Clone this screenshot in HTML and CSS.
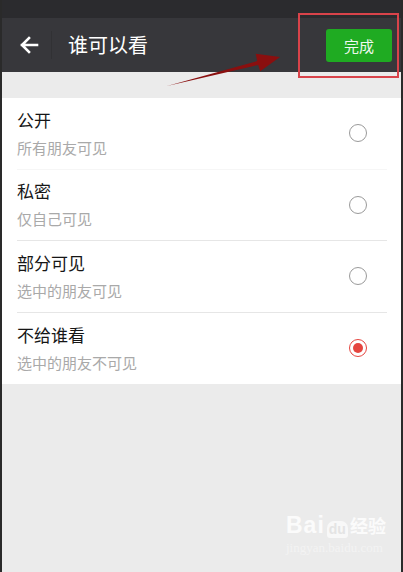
FILE: index.html
```html
<!DOCTYPE html>
<html>
<head>
    <meta charset="utf-8">
    <title>谁可以看</title>
    <link rel="stylesheet" href="styles.css">
</head>
<body>
    <div class="screen">
        <div class="statusBar"></div>
        <div class="header">
            <div class="back">
                <svg width="20" height="18" viewBox="0 0 20 18">
                    <path d="M18 9H3M10 2L3 9l7 7" fill="none" stroke="#fff" stroke-width="2.6" stroke-linecap="square"/>
                </svg>
            </div>
            <div class="title">谁可以看</div>
            <button class="doneBtn">完成</button>
        </div>

        <div class="band"></div>

        <div class="list">
            <div class="row faint">
                <div class="text">
                    <div class="name">公开</div>
                    <div class="desc">所有朋友可见</div>
                </div>
                <span class="radio"></span>
            </div>
            <div class="row">
                <div class="text">
                    <div class="name">私密</div>
                    <div class="desc">仅自己可见</div>
                </div>
                <span class="radio"></span>
            </div>
            <div class="row">
                <div class="text">
                    <div class="name">部分可见</div>
                    <div class="desc">选中的朋友可见</div>
                </div>
                <span class="radio"></span>
            </div>
            <div class="row last">
                <div class="text">
                    <div class="name">不给谁看</div>
                    <div class="desc">选中的朋友不可见</div>
                </div>
                <span class="radio checked"></span>
            </div>
        </div>

        <!-- annotation drawn over the screenshot -->
        <div class="markBox"></div>
        <svg class="markArrow" width="403" height="100" viewBox="0 0 403 100">
            <polygon points="167,86 257.2,61.1 255.7,53.8 280,57 260.2,71.2 258.2,64.9" fill="#8a0f0f"/>
        </svg>

        <div class="watermark">
            <div class="wmLogo"><span class="wmBai">Bai</span><span class="wmDu">du</span><span class="wmJy">经验</span></div>
            <div class="wmUrl">jingyan.baidu.com</div>
        </div>
    </div>
</body>
</html>
```

FILE: styles.css
```css
body {
    margin: 0;
    font-family: "Noto Sans CJK SC", "Noto Sans", sans-serif;
    background-color: #ebebeb;
}

.screen {
    position: relative;
    width: 403px;
    height: 572px;
    box-sizing: border-box;
    border-left: 2px solid #2a2a2a;
    border-right: 2px solid #2a2a2a;
    background-color: #ebebeb;
    overflow: hidden;
}

.statusBar {
    height: 18px;
    background-color: #2b2b2e;
}

.header {
    display: flex;
    align-items: center;
    height: 54px;
    background-color: #37373b;
}

.back {
    display: flex;
    align-items: center;
    width: 50px;
    height: 28px;
    padding-left: 17px;
    box-sizing: border-box;
    border-right: 1px solid #313134;
}

.back svg {
    display: block;
}

.title {
    flex: 1;
    margin-left: 16px;
    color: #fff;
    font-size: 20px;
    line-height: 24px;
}

.doneBtn {
    width: 66px;
    height: 33px;
    margin-right: 9px;
    border: none;
    border-radius: 3px;
    background-color: #1fab22;
    color: #eef8ee;
    font-family: inherit;
    font-size: 15px;
    padding: 0;
}

.band {
    height: 26px;
}

.list {
    background-color: #fff;
}

.row {
    display: flex;
    align-items: center;
    margin: 0 14px 0 15px;
    height: 71.5px;
    box-sizing: border-box;
    border-bottom: 1px solid #e6e6e6;
}

.row.faint {
    border-bottom-color: #f6f6f6;
}

.row.last {
    border-bottom: none;
}

.text {
    flex: 1;
}

.name {
    font-size: 17px;
    line-height: 20px;
    color: #161616;
}

.desc {
    margin-top: 8px;
    font-size: 15px;
    line-height: 19px;
    color: #a9a9a9;
}

.radio {
    width: 16px;
    height: 16px;
    margin-right: 20px;
    border: 1.5px solid #9a9a9a;
    border-radius: 50%;
}

.radio.checked {
    position: relative;
    border-color: #e5453f;
}

.radio.checked::after {
    content: "";
    position: absolute;
    left: 3px;
    top: 3px;
    width: 10px;
    height: 10px;
    border-radius: 50%;
    background-color: #e5453f;
}

.markBox {
    position: absolute;
    left: 296px;
    top: 13px;
    width: 97px;
    height: 61px;
    border: 2.5px solid #d9434a;
}

.markArrow {
    position: absolute;
    left: -2px;
    top: 0;
}

.watermark {
    position: absolute;
    left: 284px;
    top: 512px;
    color: #fbfbfb;
    font-family: "Liberation Sans", "Noto Sans CJK SC", sans-serif;
}

.wmLogo {
    display: flex;
    align-items: flex-end;
    line-height: 26px;
}

.wmBai {
    font-size: 23px;
    font-weight: bold;
    letter-spacing: 1px;
}

.wmDu {
    margin: 0 2px;
    padding: 0 2px;
    border-radius: 7px 7px 3px 3px;
    background-color: #f8f8f8;
    color: #e4e4e4;
    font-size: 14px;
    font-weight: bold;
    line-height: 17px;
}

.wmJy {
    font-family: "Noto Sans CJK SC", sans-serif;
    font-size: 18px;
    font-weight: bold;
}

.wmUrl {
    margin-top: 2px;
    font-family: "Liberation Serif", serif;
    font-size: 13px;
    color: #f3f3f3;
}
```
